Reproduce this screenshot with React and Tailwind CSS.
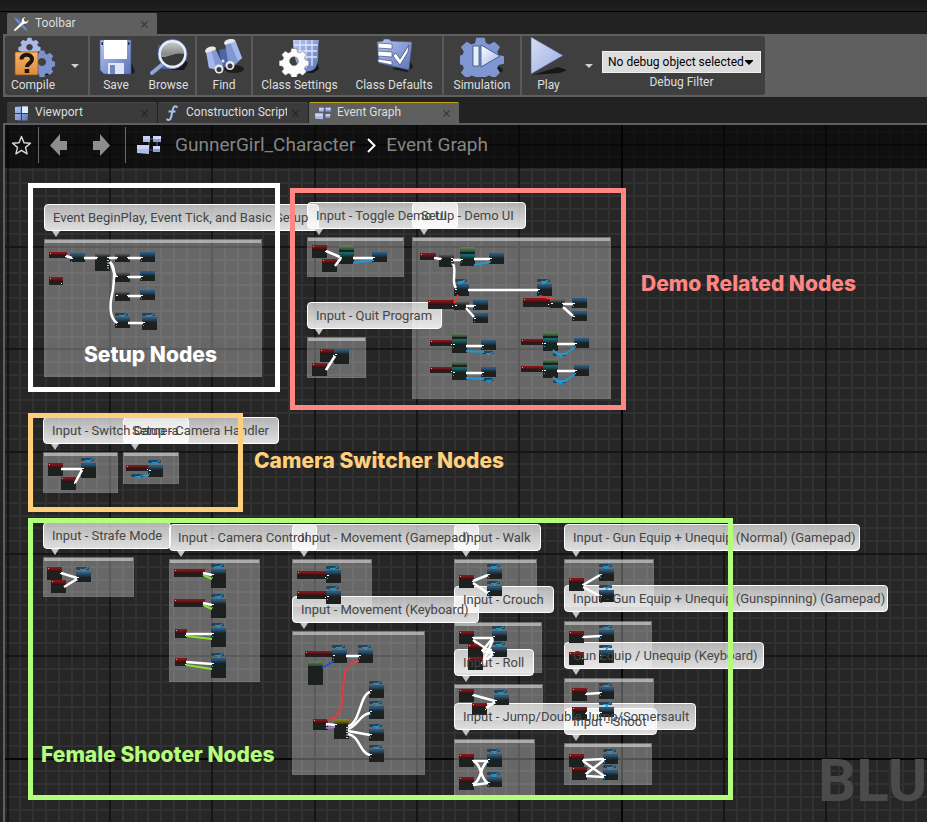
import React from "react";

const ORIGIN_X = 5;
const ORIGIN_Y = 125;

const comments = [
  { x: 44, y: 239, w: 218, h: 138, bubbleY: 204, bubbleW: 275, label: "Event BeginPlay, Event Tick, and Basic Setup" },
  { x: 307, y: 237, w: 97, h: 40, bubbleY: 202, bubbleW: 151, label: "Input - Toggle Demo UI" },
  { x: 412, y: 237, w: 199, h: 162, bubbleY: 202, bubbleW: 114, label: "Setup - Demo UI" },
  { x: 307, y: 337, w: 59, h: 41, bubbleY: 302, bubbleW: 135, label: "Input - Quit Program" },
  { x: 43, y: 452, w: 75, h: 41, bubbleY: 417, bubbleW: 146, label: "Input - Switch Camera" },
  { x: 123, y: 452, w: 56, h: 32, bubbleY: 417, bubbleW: 156, label: "Setup - Camera Handler" },
  { x: 43, y: 557, w: 91, h: 40, bubbleY: 522, bubbleW: 128, label: "Input - Strafe Mode" },
  { x: 169, y: 559, w: 91, h: 123, bubbleY: 524, bubbleW: 148, label: "Input - Camera Control" },
  { x: 292, y: 559, w: 80, h: 48, bubbleY: 524, bubbleW: 187, label: "Input - Movement (Gamepad)" },
  { x: 292, y: 631, w: 133, h: 144, bubbleY: 596, bubbleW: 187, label: "Input - Movement (Keyboard)" },
  { x: 454, y: 559, w: 83, h: 42, bubbleY: 524, bubbleW: 87, label: "Input - Walk" },
  { x: 454, y: 622, w: 88, h: 51, bubbleY: 586, bubbleW: 100, label: "Input - Crouch" },
  { x: 454, y: 684, w: 89, h: 36, bubbleY: 649, bubbleW: 80, label: "Input - Roll" },
  { x: 454, y: 739, w: 81, h: 58, bubbleY: 703, bubbleW: 242, label: "Input - Jump/Double Jump/Somersault" },
  { x: 564, y: 559, w: 90, h: 48, bubbleY: 524, bubbleW: 296, label: "Input - Gun Equip + Unequip (Normal) (Gamepad)" },
  { x: 564, y: 621, w: 88, h: 47, bubbleY: 585, bubbleW: 324, label: "Input - Gun Equip + Unequip (Gunspinning) (Gamepad)" },
  { x: 564, y: 678, w: 90, h: 44, bubbleY: 642, bubbleW: 200, label: "Gun Equip / Unequip (Keyboard)" },
  { x: 564, y: 743, w: 88, h: 42, bubbleY: 708, bubbleW: 93, label: "Input - Shoot" },
];

// kind, x, y, width, height
const nodes = [
  ["red", 49, 252, 18, 6], ["blue", 70, 253, 15, 9], ["gray", 95, 252, 15, 19], ["gray", 115, 252, 15, 10],
  ["blue", 140, 252, 15, 10], ["gray", 115, 271, 15, 11], ["blue", 140, 271, 15, 10], ["gray", 115, 290, 15, 11],
  ["blue", 140, 290, 15, 10], ["red", 49, 277, 14, 8], ["var", 115, 313, 13, 3], ["blue", 115, 317, 15, 11],
  ["var", 142, 313, 13, 3], ["blue", 142, 317, 15, 13],

  ["red", 312, 245, 15, 13], ["red", 322, 259, 15, 13], ["green", 339, 245, 15, 7], ["teal", 339, 252, 15, 12],
  ["blue", 372, 252, 15, 10],

  ["red", 420, 253, 16, 7], ["gray", 439, 253, 15, 14], ["green", 460, 247, 15, 7], ["teal", 460, 254, 15, 12],
  ["blue", 489, 253, 15, 11], ["var", 454, 279, 13, 3], ["blue", 454, 284, 15, 12], ["var", 537, 279, 13, 3],
  ["blue", 537, 284, 15, 12], ["red", 428, 300, 26, 9], ["gray", 454, 300, 15, 10], ["blue", 473, 300, 15, 10],
  ["blue", 473, 313, 15, 10], ["red", 523, 298, 27, 9], ["gray", 550, 298, 15, 10], ["blue", 572, 298, 15, 10],
  ["blue", 572, 311, 15, 10],
  ["red", 430, 340, 23, 6], ["green", 452, 333, 15, 6], ["teal", 452, 339, 15, 14], ["blue", 481, 340, 15, 10], ["var", 482, 351, 12, 3],
  ["red", 430, 367, 23, 6], ["green", 452, 361, 15, 6], ["teal", 452, 367, 15, 13], ["blue", 481, 367, 15, 10], ["var", 482, 378, 12, 3],
  ["red", 521, 339, 23, 6], ["green", 543, 332, 15, 6], ["teal", 543, 338, 15, 13], ["blue", 574, 338, 15, 10], ["var", 553, 353, 13, 3],
  ["red", 521, 366, 23, 6], ["green", 543, 359, 15, 6], ["teal", 543, 365, 15, 13], ["blue", 574, 365, 15, 11], ["var", 553, 380, 13, 3],

  ["red", 320, 349, 15, 13], ["blue", 334, 349, 15, 15], ["red", 312, 363, 15, 13],

  ["red", 48, 463, 15, 13], ["red", 61, 477, 15, 13], ["var", 81, 458, 13, 3], ["blue", 81, 463, 15, 15],
  ["red", 126, 465, 23, 6], ["var", 148, 460, 13, 3], ["blue", 148, 465, 15, 12], ["var", 131, 474, 13, 3],

  ["red", 47, 567, 15, 13], ["red", 51, 580, 15, 13], ["var", 76, 567, 13, 3], ["blue", 76, 572, 15, 10],

  ["red", 174, 569, 31, 8], ["var", 211, 564, 13, 3], ["blue", 211, 569, 15, 19],
  ["red", 174, 599, 31, 8], ["var", 211, 594, 13, 3], ["blue", 211, 599, 15, 19],
  ["red", 175, 629, 12, 9], ["var", 211, 623, 13, 3], ["blue", 211, 628, 15, 19],
  ["red", 175, 658, 12, 8], ["var", 211, 653, 13, 3], ["blue", 211, 658, 15, 20],

  ["red", 297, 571, 30, 8], ["var", 326, 566, 13, 3], ["blue", 326, 570, 15, 13],
  ["red", 297, 591, 30, 8], ["var", 326, 586, 13, 3], ["blue", 326, 591, 15, 13],

  ["red", 305, 651, 29, 6], ["var", 332, 645, 13, 3], ["blue", 332, 650, 15, 13], ["var", 358, 645, 13, 3],
  ["blue", 358, 650, 15, 13], ["green", 308, 661, 15, 24], ["red", 313, 719, 15, 11], ["yellow", 334, 719, 15, 20],
  ["var", 369, 681, 13, 3], ["blue", 369, 685, 15, 13], ["var", 369, 701, 13, 3], ["blue", 369, 706, 15, 13],
  ["var", 369, 724, 13, 3], ["blue", 369, 729, 15, 12], ["var", 369, 745, 13, 3], ["blue", 369, 749, 15, 13],

  ["red", 459, 575, 15, 13], ["var", 487, 564, 13, 3], ["blue", 487, 569, 15, 10], ["var", 487, 581, 13, 3], ["blue", 487, 586, 15, 10],

  ["red", 459, 631, 15, 13], ["red", 468, 644, 15, 13], ["red", 468, 657, 15, 13], ["var", 492, 626, 13, 3],
  ["blue", 492, 631, 15, 10], ["var", 492, 642, 13, 3], ["blue", 492, 647, 15, 10],

  ["red", 459, 689, 15, 13], ["red", 472, 703, 15, 12], ["var", 494, 690, 13, 3], ["blue", 494, 695, 15, 10],

  ["red", 459, 754, 15, 13], ["red", 459, 777, 15, 13], ["var", 487, 749, 13, 3], ["blue", 487, 754, 15, 13],
  ["var", 487, 772, 13, 3], ["blue", 487, 777, 15, 10],

  ["red", 569, 578, 15, 13], ["var", 599, 564, 13, 3], ["blue", 599, 569, 15, 12], ["var", 599, 585, 13, 3], ["blue", 599, 590, 15, 12],
  ["red", 569, 631, 15, 12], ["var", 599, 625, 13, 3], ["blue", 599, 630, 15, 12], ["red", 569, 652, 15, 13],
  ["var", 599, 645, 13, 3], ["blue", 599, 650, 15, 13],
  ["red", 572, 688, 15, 13], ["var", 599, 683, 13, 3], ["blue", 599, 687, 15, 12], ["red", 572, 707, 15, 13],
  ["var", 599, 702, 13, 3], ["blue", 599, 707, 15, 10],
  ["red", 569, 754, 15, 13], ["red", 572, 767, 15, 13], ["var", 603, 749, 13, 3], ["blue", 603, 754, 15, 10],
  ["var", 603, 765, 13, 3], ["blue", 603, 770, 15, 10],
];

const execWires = [
  "M66 256L72 258", "M84 258H97", "M109 258H117", "M128 258H141", "M128 277H141", "M128 296H141", "M128 323H143",
  "M110 262C116 268 114 278 113 290C109 306 110 318 117 323", "M110 262C113 266 113 272 116 277",
  "M326 251L340 257", "M335 266L341 258", "M353 258H373",
  "M434 258L441 259", "M453 260H461", "M474 259H490", "M453 264C457 270 451 282 456 288", "M468 290H538",
  "M466 306H474", "M466 308L474 317", "M563 304H573", "M563 307L573 316",
  "M466 346H482", "M466 373H482", "M557 344H575", "M557 371H575", "M326 370L335 356",
  "M61 469H82", "M75 483L82 470", "M61 573L77 578", "M64 587L77 579",
  "M203 573L212 575", "M203 603L212 605", "M186 634H212", "M186 662L212 664",
  "M346 656H359", "M326 724L335 725",
  "M348 726C360 724 360 694 370 692", "M348 729C358 726 360 714 370 713", "M348 731L370 735", "M348 734C360 736 360 754 370 755",
  "M473 581L488 575", "M473 583L488 593",
  "M473 638H493", "M473 640L493 653", "M482 651L493 638", "M482 651L493 653", "M482 664L493 640", "M482 664L493 654",
  "M473 695L495 701", "M486 708L495 702",
  "M473 761H488", "M473 761C482 763 480 780 488 783", "M473 784C482 782 480 764 488 761", "M473 785L488 783",
  "M583 585L600 575", "M583 587L600 596", "M583 637L600 636", "M586 694L600 693", "M586 713H600",
  "M583 760L604 759", "M583 761L604 776", "M586 774L604 760", "M586 776L604 777",
];

const dataWires = [
  ["#1f9ad6", "M353 263L373 260"], ["#1f9ad6", "M474 265L490 262"], ["#1f9ad6", "M466 351L484 352"], ["#1f9ad6", "M466 378L484 379"],
  ["#1f9ad6", "M553 350L557 354H565L575 347"], ["#1f9ad6", "M553 377L557 381H565L575 374"], ["#1f9ad6", "M143 476L149 475"],
  ["#1f9ad6", "M459 284L464 281"], ["#1f9ad6", "M542 284L547 281"],
  ["#e83a3a", "M458 295L454 303"], ["#e83a3a", "M539 296L553 299"], ["#e83a3a", "M327 720C356 716 330 664 359 661"],
  ["#8ae234", "M203 575L212 579"], ["#8ae234", "M203 605L212 609"], ["#8ae234", "M186 636L212 639"], ["#8ae234", "M186 665L212 669"],
  ["#1155d8", "M322 668L334 661"], ["#a678d8", "M326 728L335 727"],
];

const headFill = { red: "url(#headRed)", blue: "url(#headBlue)", gray: "url(#headGray)", green: "url(#headGreen)", teal: "url(#headTeal)", yellow: "url(#headYellow)" };

const frames = [
  { x: 28, y: 183, w: 252, h: 209, cls: "border-white" },
  { x: 290, y: 188, w: 336, h: 222, cls: "border-[#ff8683]" },
  { x: 28, y: 413, w: 215, h: 99, cls: "border-[#ffd07b]" },
  { x: 28, y: 518, w: 705, h: 282, cls: "border-[#b4fd7c]" },
];

const captions = [
  { x: 84, y: 343, cls: "text-white", label: "Setup Nodes" },
  { x: 641, y: 272, cls: "text-[#ff8683]", label: "Demo Related Nodes" },
  { x: 254, y: 449, cls: "text-[#ffd07b]", label: "Camera Switcher Nodes" },
  { x: 41, y: 743, cls: "text-[#b4fd7c]", label: "Female Shooter Nodes" },
];

const gear = "M-2.4-10h4.8l.7 3.1 2 .9 2.8-1.7 3.3 3.3-1.7 2.8.8 2 3.2.7v4.6l-3.2.7-.8 2 1.7 2.8-3.3 3.3-2.8-1.7-2 .8-.7 3.2h-4.8l-.7-3.2-2-.8-2.8 1.7-3.3-3.3 1.7-2.8-.8-2-3.2-.7v-4.6l3.2-.7.8-2-1.7-2.8 3.3-3.3 2.8 1.7 2-.9z";

function Defs() {
  const heads = [
    ["headRed", "#85161a", "#241213"],
    ["headBlue", "#2a5c80", "#1b262e"],
    ["headGray", "#6c6c6c", "#242424"],
    ["headGreen", "#5b7d58", "#30442f"],
    ["headTeal", "#166a6c", "#162b2b"],
    ["headYellow", "#8d8814", "#37350f"],
  ];
  return (
    <svg className="absolute h-0 w-0" aria-hidden="true">
      <defs>
        {heads.map(([id, a, b]) => (
          <linearGradient key={id} id={id} x1="0" y1="0" x2="0" y2="1">
            <stop offset="0.2" stopColor={a} />
            <stop offset="1" stopColor={b} />
          </linearGradient>
        ))}
        <linearGradient id="steel" x1="0" y1="0" x2="1" y2="1">
          <stop offset="0" stopColor="#b9c8f3" />
          <stop offset="1" stopColor="#5c74b8" />
        </linearGradient>
        <linearGradient id="ice" x1="0" y1="0" x2="1" y2="1">
          <stop offset="0" stopColor="#ffffff" />
          <stop offset="1" stopColor="#9db4ea" />
        </linearGradient>
        <linearGradient id="orange" x1="0" y1="0" x2="0" y2="1">
          <stop offset="0" stopColor="#f8b468" />
          <stop offset="1" stopColor="#dd8a3c" />
        </linearGradient>
        <linearGradient id="glass" x1="0" y1="0" x2="0" y2="1">
          <stop offset="0" stopColor="#d0d0d0" />
          <stop offset="0.5" stopColor="#8a8a8a" />
          <stop offset="1" stopColor="#c0c0c0" />
        </linearGradient>
      </defs>
    </svg>
  );
}

function Icon({ children, className = "h-10 w-11", box = "0 0 44 40" }) {
  return (
    <svg className={className} viewBox={box} aria-hidden="true">
      {children}
    </svg>
  );
}

function CompileIcon() {
  return (
    <Icon>
      <path d="M34 33l8 2-5 3H28z" fill="#1b1b1b" />
      <g fillRule="evenodd">
        <path transform="translate(18.5 9) scale(.82)" fill="#a9b9e8" d={gear + "M0-2.500a4 4 0 1 0 .01 0z"} />
        <path transform="translate(31 23.500) scale(1)" fill="#7c92cc" d={gear + "M0-2.500a4 4 0 1 0 .01 0z"} />
      </g>
      <rect x="4" y="15" width="23" height="23" rx="1" fill="url(#orange)" stroke="#8a4d12" strokeWidth=".7" />
      <path d="M10.500 22.500c0-6.500 10.500-6.500 10.500 0 0 4-5 3.500-5 7.500" fill="none" stroke="#1c1512" strokeWidth="4" />
      <rect x="13.700" y="32" width="4.500" height="4" fill="#1c1512" />
    </Icon>
  );
}

function SaveIcon() {
  return (
    <Icon>
      <path d="M36 22l5 13-3 2H16z" fill="#1b1b1b" />
      <path d="M6 3h31v34H10l-4-4z" fill="url(#steel)" stroke="#42588f" strokeWidth=".7" />
      <rect x="10" y="3" width="23" height="19" fill="#fff" />
      <path d="M14 26h16v11H14z" fill="#dfe6f8" />
      <rect x="16" y="28" width="5" height="9" fill="#7086bf" />
      <path d="M7.500 5h1.500v3H7.500zM34 5h1.500v3H34z" fill="#25304f" />
    </Icon>
  );
}

function BrowseIcon() {
  return (
    <Icon>
      <path d="M11 8h27v24H15z" fill="#4763a6" />
      <path d="M24 33h13l4-7-6-6z" fill="#181818" />
      <path d="M17 26L5 36" stroke="#8ea4db" strokeWidth="4" strokeLinecap="round" />
      <circle cx="25.500" cy="17" r="13" fill="url(#glass)" />
      <path d="M12.500 19c6 4 14-5 26-2 0 17-23 18-26 2z" fill="#3a3a3a" />
      <path d="M17 26c5 5 13 4 17 0-2 8-15 8-17 0z" fill="#a9a9a9" />
      <circle cx="25.500" cy="17" r="13" fill="none" stroke="#e6edff" strokeWidth="2.800" />
      <circle cx="25.500" cy="17" r="14.700" fill="none" stroke="#5169a8" strokeWidth=".7" />
    </Icon>
  );
}

function FindIcon() {
  return (
    <Icon>
      <ellipse cx="32" cy="32" rx="10" ry="4" fill="#1c1c1c" />
      <path d="M17 13l9-2 3 15-9 5z" fill="#4d66a5" />
      <path d="M4 14l9-3 8 17-6 5-8-2z" fill="#8098d4" />
      <path d="M4 14l5-2 5 20-7-1z" fill="#a5b8ea" />
      <path d="M23 6l10-3 7 18-7 7-7-3z" fill="#7f97d3" />
      <path d="M28 5l5-2 7 18-4 3z" fill="#a5b8ea" />
      <path d="M3 14c1-4 8-6 11-3l-1 2-9 3zM22 6c1-4 8-5 11-3l-1 2-9 3z" fill="#ece9e2" />
      <circle cx="17" cy="32" r="4.500" fill="#e8e8e8" />
      <circle cx="17" cy="32.500" r="2.500" fill="#3a3a3a" />
      <circle cx="28" cy="28.500" r="4.500" fill="#e8e8e8" />
      <circle cx="28" cy="29" r="2.500" fill="#3a3a3a" />
      <circle cx="21" cy="24" r="1.500" fill="#dfe6fb" />
    </Icon>
  );
}

function ClassSettingsIcon() {
  return (
    <Icon>
      <path d="M35 36l6-4-2-8-10 12z" fill="#161616" />
      <path d="M15 3h26c-2 10 1 20-3 27-3 5-9 5-14 3-6-3-9-18-9-30z" fill="url(#steel)" />
      <path d="M22 3v25M28 3v28M34 3v26M16 8h24M17 14h22M19 20h20" stroke="#dbe5ff" strokeWidth="1.300" fill="none" />
      <path transform="translate(16 22.500) scale(1.100)" fillRule="evenodd" fill="#fbfbfb" stroke="#555" strokeWidth=".4" d={gear + "M0-2.500a4 4 0 1 0 .01 0z"} />
    </Icon>
  );
}

function ClassDefaultsIcon() {
  return (
    <Icon>
      <path d="M38 24l3 6-6 5-15-3z" fill="#1a1a1a" />
      <path d="M5 5l6-1 1-2h5l2 2 21 1-3 28-30-7z" fill="url(#steel)" stroke="#43588f" strokeWidth=".7" />
      <path d="M6 6l14 1v5L6 11zM6 14l14 1v5L6 19zM6 22l14 2v4L6 25z" fill="#fff" stroke="#42527d" strokeWidth=".7" />
      <path d="M21 19l3-3 4 6 9-14-1 7-8 13z" fill="#fff" stroke="#34446f" strokeWidth=".7" />
    </Icon>
  );
}

function SimulationIcon() {
  return (
    <Icon>
      <ellipse cx="34" cy="33" rx="9" ry="4" fill="#1c1c1c" />
      <g transform="translate(20.500 19)">
        <path transform="scale(1.750 1.650) translate(0 -1)" fill="#7f96d2" d={gear} />
      </g>
      <path d="M13 9h6v20h-6z" fill="#e5f0fb" stroke="#374672" strokeWidth=".8" />
      <path d="M21 8l19 11-19 11z" fill="url(#ice)" stroke="#374672" strokeWidth=".8" />
    </Icon>
  );
}

function PlayIcon() {
  return (
    <Icon>
      <path d="M5 38l26-8 9 3-7 3z" fill="#171717" />
      <path d="M4 0l32 18.500L4 37z" fill="url(#ice)" stroke="#46557f" strokeWidth=".7" />
      <path d="M4 0l32 18.500L4 37z" fill="#8ea3d8" opacity=".35" />
    </Icon>
  );
}

function GraphIcon({ className }) {
  return (
    <svg className={className} viewBox="0 0 24 20" aria-hidden="true">
      <path d="M12 7v7M8 4h8M10 15h8M20 6v6" stroke="#59648a" strokeWidth="1" />
      <path d="M6 1h7v6H6zM0 10h12v9l-12-1z" fill="#aebbe8" />
      <path d="M6 1h7v3H6zM0 10h12v4H0z" fill="#c9d4f5" />
      <path d="M16 1h8v6h-8zM16 11h7v6h-7z" fill="#8c9fd9" />
      <path d="M16 1h8v3h-8zM16 11h7v3h-7z" fill="#cdd9fa" />
    </svg>
  );
}

function ToolButton({ icon, label, className }) {
  return (
    <button type="button" className={"flex flex-col items-center pt-[1px] whitespace-nowrap " + className}>
      {icon}
      <span>{label}</span>
    </button>
  );
}

function Divider() {
  return <div className="w-[2px] self-stretch bg-[#5a5a5a]" />;
}

function DropArrow({ className, label }) {
  return (
    <button type="button" aria-label={label} className={"flex items-center justify-center " + className}>
      <svg className="h-1 w-2" viewBox="0 0 8 4" aria-hidden="true">
        <path d="M0 0h8L4 4z" fill="#cfcfcf" />
      </svg>
    </button>
  );
}

function Tab({ icon, label, active, accent }) {
  return (
    <div
      className={
        "flex h-[21px] w-[150px] items-center rounded-t-[2px] border-t pr-[9px] pl-[6px] " +
        (active ? "bg-[#5f5f5f] " : "bg-[#3b3b3b] ") +
        (accent ? "border-[#c2a41a]" : active ? "border-[#5f5f5f]" : "border-[#474747]")
      }
    >
      <span className="flex w-4 shrink-0 justify-center">{icon}</span>
      <button type="button" className="-mt-[2px] ml-[6px] flex-1 overflow-hidden text-left whitespace-nowrap">
        {label}
      </button>
      <button type="button" aria-label={"Close " + label} className="ml-[5px]">
        <svg className="h-[7px] w-[7px]" viewBox="0 0 7 7" aria-hidden="true">
          <path d="M.5.5l6 6M6.500.5l-6 6" stroke={active ? "#3a3a3a" : "#262626"} strokeWidth="1.200" />
        </svg>
      </button>
    </div>
  );
}

function ToolsIcon() {
  return (
    <svg className="h-4 w-4 shrink-0" viewBox="0 0 16 16" aria-hidden="true">
      <path d="M1 1l4 2 8 9 2 3-3-1-9-9z" fill="#5f8fd8" />
      <path d="M2 15.500L.5 14l8-8C8 3 10 .5 13 1l-2 2 .5 2 2 .5L15.500 3.500c.5 3-2 5-4.500 4.500z" fill="#fff" stroke="#333" strokeWidth=".4" />
    </svg>
  );
}

function ViewportIcon() {
  return (
    <svg className="h-[15px] w-[15px]" viewBox="0 0 15 15" aria-hidden="true">
      <path d="M1 1l6-.5V7H1zM8 .5h6V7H8zM1 8h6v6.500L1 14zM8 8h6l-.5 6.500H8z" fill="url(#steel)" />
      <path d="M8 .5h6V7H8z" fill="#dbeeff" />
    </svg>
  );
}

function FunctionIcon() {
  return (
    <svg className="h-4 w-4" viewBox="0 0 16 16" aria-hidden="true">
      <path d="M13.500 2.500C11.500.3 9.500 1.500 9 4L7 12.500c-.6 2.500-2.500 3.200-4.500 1.500M4.500 6.500h7" fill="none" stroke="#a9bff5" strokeWidth="2" />
    </svg>
  );
}

function Toolbar() {
  return (
    <header className="ml-[3px] bg-[#5f5f5f] pt-[2px] pb-[2px] pl-[2px]">
      <div className="flex h-[59px] w-fit rounded-[3px] bg-[#3f3f3f] text-[#dedede] [text-shadow:1px_1px_0_#000]">
        <ToolButton icon={<CompileIcon />} label="Compile" className="w-14" />
        <DropArrow label="Compile options" className="w-[27px]" />
        <Divider />
        <ToolButton icon={<SaveIcon />} label="Save" className="w-[52px]" />
        <ToolButton icon={<BrowseIcon />} label="Browse" className="w-[53px]" />
        <Divider />
        <ToolButton icon={<FindIcon />} label="Find" className="w-[54px]" />
        <Divider />
        <ToolButton icon={<ClassSettingsIcon />} label="Class Settings" className="w-[93px]" />
        <ToolButton icon={<ClassDefaultsIcon />} label="Class Defaults" className="w-[96px]" />
        <Divider />
        <ToolButton icon={<SimulationIcon />} label="Simulation" className="w-[76px]" />
        <Divider />
        <ToolButton icon={<PlayIcon />} label="Play" className="w-[53px]" />
        <DropArrow label="Play options" className="w-[27px]" />
        <div className="flex flex-col items-center pt-[15px] pr-1 [text-shadow:none]">
          <div className="relative">
            <select
              id="debug-object"
              className="h-[22px] w-[159px] appearance-none border border-[#f0f0f0] bg-[#dcdcdc] pl-[5px] text-black"
            >
              <option>No debug object selected</option>
            </select>
            <svg className="pointer-events-none absolute top-[9px] right-2 h-[5px] w-2" viewBox="0 0 8 5" aria-hidden="true">
              <path d="M0 0h8v1L4 5 0 1z" fill="#000" />
            </svg>
          </div>
          <label htmlFor="debug-object" className="mt-[1px]">
            Debug Filter
          </label>
        </div>
      </div>
    </header>
  );
}

function Grid() {
  const step = 12.79;
  const minors = [];
  const majors = [];
  for (let i = -16; i < 240; i++) {
    const major = i % 8 === 0;
    const vx = Math.round(110 - ORIGIN_X + i * step);
    const hy = Math.round(247 - ORIGIN_Y + i * step);
    const base = major ? "#151515" : "#313131";
    (major ? majors : minors).push(
      <rect key={"v" + i} x={vx - 1} y="0" width="2" height="100%" fill={i === 40 ? "#060606" : base} />,
      <rect key={"h" + i} x="0" y={hy - 1} width="100%" height="2" fill={i === 40 ? "#060606" : base} />
    );
  }
  return (
    <svg className="absolute inset-0 h-full w-full" aria-hidden="true">
      {minors}
      {majors}
    </svg>
  );
}

function NodeShape({ node }) {
  const [kind, x, y, w, h] = node;
  if (kind === "var") {
    return (
      <g>
        <rect x={x} y={y} width={w} height={h} rx="1" fill="#23435a" />
        <path d={`M${x + 4} ${y + 2.5}h5l3-2`} stroke="#1c95d4" strokeWidth="1.200" fill="none" />
        <path d={`M${x + w - 4} ${y + 2}l-2 3`} stroke="#1c95d4" strokeWidth="1.500" />
      </g>
    );
  }
  const pinY = y + Math.min(5, h - 3);
  return (
    <g>
      <rect x={x} y={y} width={w} height={h} rx=".6" fill="#1c201f" />
      <rect x={x} y={y} width={w} height={Math.min(5, h - 2)} rx=".6" fill={headFill[kind]} />
      {kind === "red" ? (
        <>
          <rect x={x + 1} y={y + 1} width="1" height="1" fill="#e9a0a0" />
          <rect x={x + w - 2} y={pinY + 1} width="1" height="1" fill="#fff" />
        </>
      ) : (
        <>
          {kind !== "green" && <rect x={x + 1} y={pinY} width="2" height="1" fill="#fff" />}
          {kind === "gray" && <rect x={x + w - 3} y={pinY} width="2" height="1" fill="#fff" />}
          {(kind === "gray" || kind === "yellow") && h > 12 && (
            <path d={`M${x + w - 2} ${pinY + 3}v${h - 9}`} stroke="#fff" strokeWidth="1.500" strokeDasharray="1 1.500" />
          )}
          {(kind === "blue" || kind === "teal") && <rect x={x + 1} y={pinY + 3} width="1" height="1" fill="#28a8e0" />}
        </>
      )}
    </g>
  );
}

function CommentBox({ c }) {
  return (
    <section>
      <div
        className="absolute border border-white/5 bg-white/30"
        style={{ left: c.x - ORIGIN_X, top: c.y - ORIGIN_Y, width: c.w, height: c.h }}
      >
        <div className="h-[3px] bg-white/45" />
      </div>
      <div
        className="absolute flex h-[27px] items-center rounded-[4px] border border-white bg-linear-to-b from-white/65 to-white/85 pl-2"
        style={{ left: c.x - ORIGIN_X, top: c.bubbleY - ORIGIN_Y, width: c.bubbleW }}
      >
        <h2 className="relative z-25 text-[13px] whitespace-nowrap text-[#454545]">{c.label}</h2>
        <svg className="absolute top-[26px] left-[7px] h-[6px] w-2" viewBox="0 0 8 6" aria-hidden="true">
          <path d="M0 0h8L4 6z" fill="#c4c4c4" />
        </svg>
      </div>
    </section>
  );
}

function GraphCanvas() {
  return (
    <main className="relative ml-[3px] min-h-[690px] flex-1 overflow-hidden border-t-2 border-l-2 border-[#5f5f5f] bg-[#262626]">
      <Grid />
      <nav className="relative z-40 flex h-[43px] items-center bg-black/60 pb-[3px] text-[19px] text-[#858585]" aria-label="Breadcrumb">
        <button type="button" aria-label="Favorite" className="ml-[6px]">
          <svg className="h-[21px] w-[21px]" viewBox="0 0 21 21" aria-hidden="true">
            <path d="M10.500 1.500l2.500 6.200 6.500.5-5 4.200 1.600 6.500-5.600-3.600-5.600 3.600 1.600-6.500-5-4.200 6.500-.5z" fill="none" stroke="#d8d8d8" strokeWidth="1.400" strokeLinejoin="round" />
          </svg>
        </button>
        <div className="ml-[6px] h-9 w-px bg-[#6a6a6a]" />
        <button type="button" aria-label="Back" className="ml-[11px]">
          <svg className="h-[23px] w-[18px]" viewBox="0 0 18 23" aria-hidden="true">
            <path d="M3 21h14v2H5z" fill="#0a0a0a" />
            <path d="M0 11.500L10 0v7h7v9h-7v6z" fill="#8d8d8d" />
          </svg>
        </button>
        <button type="button" aria-label="Forward" className="ml-6">
          <svg className="h-[23px] w-[18px]" viewBox="0 0 18 23" aria-hidden="true">
            <path d="M1 21h12v2H1z" fill="#0a0a0a" />
            <path d="M18 11.500L8 0v7H1v9h7v6z" fill="#8d8d8d" />
          </svg>
        </button>
        <div className="ml-[15px] h-9 w-px bg-[#6a6a6a]" />
        <GraphIcon className="ml-[11px] h-5 w-6" />
        <a href="#character" className="ml-[14px]">GunnerGirl_Character</a>
        <svg className="ml-3 h-[15px] w-[9px]" viewBox="0 0 9 15" aria-hidden="true">
          <path d="M1 1l6.500 6.500L1 14" fill="none" stroke="#fff" strokeWidth="2" />
        </svg>
        <a href="#event-graph" className="ml-[10px]">Event Graph</a>
      </nav>

      <div className="absolute top-[620px] left-[813px] text-[60px] leading-[72px] font-bold whitespace-nowrap text-[#4b4b4b]">BLUEPRINT</div>

      {comments.map((c) => (
        <CommentBox key={c.label} c={c} />
      ))}

      <svg className="absolute inset-0 z-20 h-full w-full" aria-hidden="true">
        <g transform={`translate(${-ORIGIN_X} ${-ORIGIN_Y})`}>
          {nodes.map((n, i) => (
            <NodeShape key={i} node={n} />
          ))}
          <g fill="none" strokeWidth="2">
            {dataWires.map(([stroke, d]) => (
              <path key={d} d={d} stroke={stroke} />
            ))}
          </g>
          <g fill="none" stroke="#fff" strokeWidth="2.500">
            {execWires.map((d) => (
              <path key={d} d={d} />
            ))}
          </g>
        </g>
      </svg>

      {frames.map((f) => (
        <div
          key={f.cls}
          className={"absolute z-30 border-[5px] " + f.cls}
          style={{ left: f.x - ORIGIN_X, top: f.y - ORIGIN_Y, width: f.w, height: f.h }}
        />
      ))}
      {captions.map((t) => (
        <h1
          key={t.label}
          className={"absolute z-30 font-[Inter,sans-serif] text-[21px] leading-6 font-extrabold whitespace-nowrap " + t.cls}
          style={{ left: t.x - ORIGIN_X, top: t.y - ORIGIN_Y }}
        >
          {t.label}
        </h1>
      ))}
    </main>
  );
}

export default function App() {
  return (
    <div className="flex min-h-screen flex-col bg-[#222222] font-[Roboto,sans-serif] text-[12px] leading-4 text-[#dedede]">
      <Defs />
      <div className="h-3 border-b border-black bg-linear-to-b from-[#181818] to-[#202020]" />
      <div className="flex pt-[1px] pl-[7px] [text-shadow:1px_1px_0_#000]">
        <Tab icon={<ToolsIcon />} label="Toolbar" active />
      </div>
      <Toolbar />
      <div className="flex gap-[1px] pt-[5px] pl-[7px] [text-shadow:1px_1px_0_#000]">
        <Tab icon={<ViewportIcon />} label="Viewport" />
        <Tab icon={<FunctionIcon />} label="Construction Script" />
        <Tab icon={<GraphIcon className="h-[13px] w-4" />} label="Event Graph" active accent />
      </div>
      <GraphCanvas />
    </div>
  );
}
